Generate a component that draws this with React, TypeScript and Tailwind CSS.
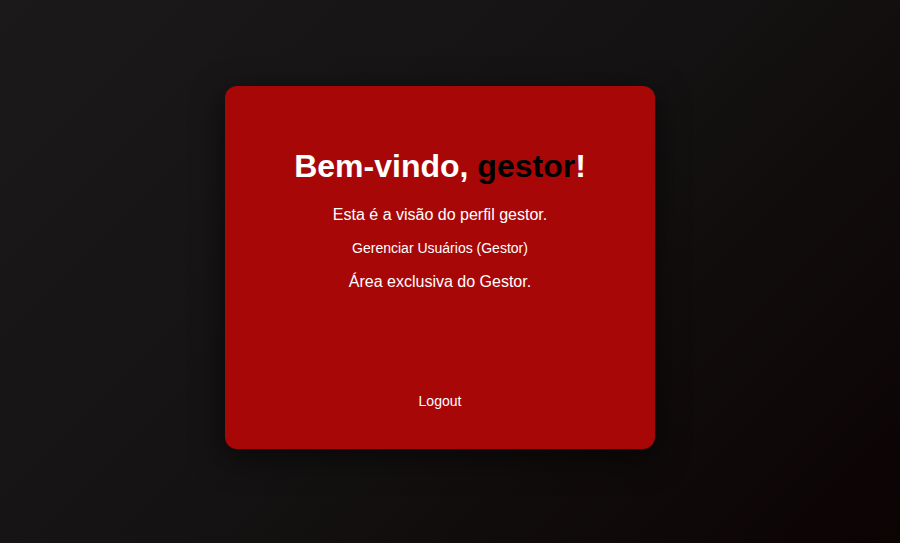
import React from "react";

export default function App() {
  return (
    <div
      className="w-full h-[543px] flex items-start justify-center bg-[linear-gradient(135deg,#1b1919_0%,#141212_50%,#0c0303_100%)]"
      style={{ fontFamily: '"Liberation Sans", Arial, sans-serif' }}
    >
      <div className="mt-[86px] mr-5 w-[430px] h-[363px] rounded-[12px] bg-[#a80707] shadow-[0_8px_32px_rgba(0,0,0,0.6)] flex flex-col items-center px-10 pb-10 pt-[62px] text-white">
        <h1 className="text-[32px] leading-[37px] font-bold">
          Bem-vindo, <span className="text-black">gestor</span>!
        </h1>
        <p className="mt-[21px] text-[16px] leading-[18px]">Esta é a visão do perfil gestor.</p>
        <p className="mt-[16px] text-[14px] leading-[16px]">Gerenciar Usuários (Gestor)</p>
        <p className="mt-[17px] text-[16px] leading-[18px]">Área exclusiva do Gestor.</p>
        <button className="mt-auto text-[14px] leading-[16px] text-white">Logout</button>
      </div>
    </div>
  );
}
